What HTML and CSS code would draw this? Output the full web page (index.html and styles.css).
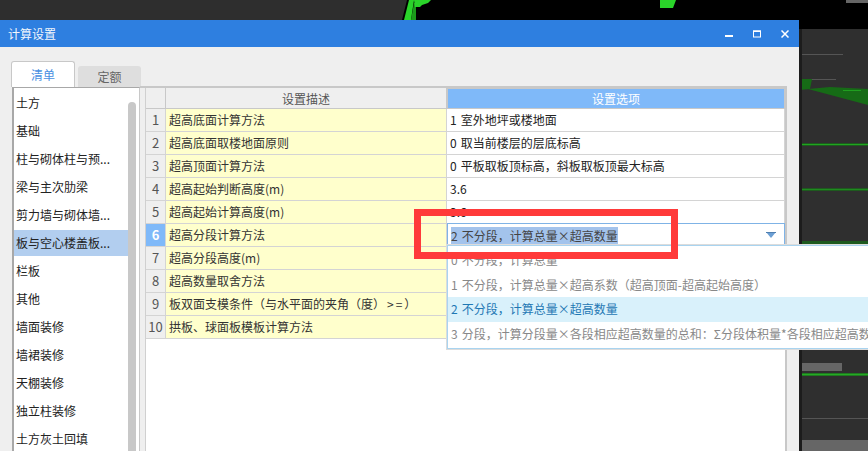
FILE: index.html
```html
<!DOCTYPE html>
<html lang="zh-CN">
<head>
<meta charset="utf-8">
<title>计算设置</title>
<link rel="stylesheet" href="styles.css">
</head>
<body>
<div class="stage">
  <svg class="backdrop" width="868" height="451" viewBox="0 0 868 451">
    <rect width="868" height="451" fill="#000"/>
    <polygon points="0,0 407,0 402,20 0,20" fill="#2e2e2e"/>
    <polygon points="404,20 409,0 414,0 411,20" fill="#2ad42a"/>
    <polygon points="411,20 414,3 416,3 416,20" fill="#1b9a1b"/>
    <polygon points="414,0 431,0 428,3 422,5 420,7 415,7" fill="#2ad42a"/>
    <polygon points="660,0 676,0 673,8 660,8" fill="#2ad42a"/>
    <rect x="846" y="0" width="22" height="3" fill="#666"/>
    <rect x="799" y="29" width="69" height="422" fill="#2f2f2f"/>
    <rect x="799" y="54" width="44" height="1" fill="#555"/>
    <rect x="810" y="79" width="26" height="1" fill="#555"/>
    <polygon points="799,79 812,79 810,89 799,90" fill="#166b16"/>
    <polygon points="808,89 830,87 868,89 868,105" fill="#166b16"/>
    <rect x="843" y="90" width="18" height="1" fill="#1fa01f"/>
    <rect x="799" y="143" width="69" height="3" fill="#1e5a1e"/>
    <rect x="799" y="144" width="69" height="1" fill="#1fa51f"/>
    <rect x="799" y="188" width="69" height="3" fill="#1e5a1e"/>
    <rect x="799" y="189" width="69" height="1" fill="#1f8a1f"/>
    <rect x="799" y="241" width="69" height="4" fill="#1e5a1e"/>
    <rect x="799" y="363" width="43" height="8" fill="#666"/>
    <rect x="799" y="373" width="69" height="3" fill="#1f7a1f"/>
    <rect x="799" y="374" width="69" height="1" fill="#25a825"/>
    <rect x="799" y="418" width="69" height="1" fill="#555"/>
    <rect x="799" y="440" width="69" height="11" fill="#666"/>
    <rect x="799" y="29" width="3" height="422" fill="#1c1c1c"/>
  </svg>

  <section class="dialog">
    <header class="titlebar">
      <span class="title">计算设置</span>
      <div class="controls">
        <svg width="8" height="8" viewBox="0 0 8 8"><rect y="5" width="8" height="2" fill="#fff"/></svg>
        <svg width="8" height="8" viewBox="0 0 8 8"><rect x="0.5" y="1" width="7" height="6" fill="none" stroke="#fff"/><rect y="0.5" width="8" height="1.5" fill="#fff"/></svg>
        <svg width="8" height="8" viewBox="0 0 8 8"><path d="M0.5 0.5L7.5 7.5M7.5 0.5L0.5 7.5" stroke="#fff" stroke-width="1.5" fill="none"/></svg>
      </div>
    </header>

    <div class="content">
      <div class="tabs">
        <div class="tab tab-active">清单</div>
        <div class="tab">定额</div>
      </div>
      <div class="main">
        <aside class="list">
          <div class="list-items">
            <div class="item">土方</div>
            <div class="item">基础</div>
            <div class="item">柱与砌体柱与预...</div>
            <div class="item">梁与主次肋梁</div>
            <div class="item">剪力墙与砌体墙...</div>
            <div class="item item-selected">板与空心楼盖板...</div>
            <div class="item">栏板</div>
            <div class="item">其他</div>
            <div class="item">墙面装修</div>
            <div class="item">墙裙装修</div>
            <div class="item">天棚装修</div>
            <div class="item">独立柱装修</div>
            <div class="item">土方灰土回填</div>
          </div>
          <div class="scrollbar"></div>
        </aside>
        <div class="panel">
          <div class="grid">
            <div class="row row-head">
              <div class="cell num"></div>
              <div class="cell desc-head">设置描述</div>
              <div class="cell value-head">设置选项</div>
            </div>
            <div class="row"><div class="cell num">1</div><div class="cell desc">超高底面计算方法</div><div class="cell value">1 室外地坪或楼地面</div></div>
            <div class="row"><div class="cell num">2</div><div class="cell desc">超高底面取楼地面原则</div><div class="cell value">0 取当前楼层的层底标高</div></div>
            <div class="row"><div class="cell num">3</div><div class="cell desc">超高顶面计算方法</div><div class="cell value">0 平板取板顶标高，斜板取板顶最大标高</div></div>
            <div class="row"><div class="cell num">4</div><div class="cell desc">超高起始判断高度(m)</div><div class="cell value">3.6</div></div>
            <div class="row"><div class="cell num">5</div><div class="cell desc">超高起始计算高度(m)</div><div class="cell value">3.6</div></div>
            <div class="row"><div class="cell num num-active">6</div><div class="cell desc">超高分段计算方法</div>
              <div class="cell value value-active"><span class="selection">2 不分段，计算总量×超高数量</span><svg class="caret" width="10" height="6" viewBox="0 0 10 6"><path d="M0 0H10L5 6Z" fill="#6b9fd4"/><rect width="10" height="1" fill="#4f7fb0"/></svg></div></div>
            <div class="row"><div class="cell num">7</div><div class="cell desc">超高分段高度(m)</div><div class="cell value"></div></div>
            <div class="row"><div class="cell num">8</div><div class="cell desc">超高数量取舍方法</div><div class="cell value"></div></div>
            <div class="row"><div class="cell num">9</div><div class="cell desc">板双面支模条件（与水平面的夹角（度）<span class="sign">&gt;=</span>）</div><div class="cell value"></div></div>
            <div class="row"><div class="cell num">10</div><div class="cell desc">拱板、球面板模板计算方法</div><div class="cell value"></div></div>
          </div>
        </div>
      </div>
    </div>
  </section>

  <div class="dropdown">
    <div class="option">0 不分段，计算总量</div>
    <div class="option">1 不分段，计算总量×超高系数（超高顶面-超高起始高度）</div>
    <div class="option option-current">2 不分段，计算总量×超高数量</div>
    <div class="option">3 分段，计算分段量×各段相应超高数量的总和：Σ分段体积量*各段相应超高数量</div>
  </div>

  <div class="annotation"></div>
</div>
</body>
</html>
```

FILE: styles.css
```css
* { box-sizing: border-box; }
html, body { margin: 0; padding: 0; }
body {
  width: 868px;
  height: 451px;
  overflow: hidden;
  font-family: "Noto Sans CJK SC", "Noto Sans", sans-serif;
  font-size: 12px;
  color: #222;
}
.stage { position: relative; width: 868px; height: 451px; overflow: hidden; }
.backdrop { position: absolute; left: 0; top: 0; display: block; }

.dialog {
  position: absolute;
  left: 0;
  top: 20px;
  width: 799px;
  height: 431px;
  background: #efefef;
  overflow: hidden;
}
.titlebar {
  height: 27px;
  background: #2e7fe0;
  display: flex;
  align-items: center;
  justify-content: space-between;
  padding: 0 10px 0 8px;
  color: #f2f6fc;
}
.title { line-height: 27px; }
.controls { display: flex; gap: 20px; align-items: center; margin-right: 0; }
.controls svg { display: block; }

.content { padding-top: 15px; }
.tabs { display: flex; align-items: flex-end; gap: 3px; height: 25px; padding-left: 11px; }
.tab {
  width: 63px;
  height: 21px;
  background: #dedede;
  border-radius: 3px 3px 0 0;
  text-align: center;
  line-height: 21px;
  color: #666;
}
.tab-active {
  width: 64px;
  height: 26px;
  background: #fff;
  border: 1px solid #c8c8c8;
  border-bottom: 0;
  line-height: 25px;
  color: #4a90e2;
  position: relative;
  z-index: 1;
}

.main { display: flex; padding-left: 12px; height: 400px; margin-top: -1px; }
.list {
  width: 128px;
  flex: none;
  background: #fff;
  border-left: 2px solid #a8a8a8;
  border-top: 1px solid #a8a8a8;
  border-right: 1px solid #c8c8c8;
  margin-top: 1px;
  display: flex;
}
.list-items { width: 114px; flex: none; padding-top: 1px; }
.item { height: 28px; line-height: 28px; padding-left: 2px; white-space: nowrap; }
.item-selected {
  height: 26px;
  line-height: 26px;
  margin: 1px 0;
  background: #b2ceef;
}
.scrollbar {
  width: 8px;
  flex: none;
  margin-top: 14px;
  background: #c8c8c8;
  border-radius: 4px 4px 0 0;
}

.panel {
  width: 647px;
  flex: none;
  border-top: 2px solid #c8c8c8;
  padding-left: 5px;
}
.grid {
  height: 398px;
  width: 642px;
  background: #fff;
  border-left: 1px solid #d0d0d0;
  border-right: 2px solid #c8c8c8;
}
.row { display: flex; height: 23px; }
.row-head { height: 21px; }
.cell {
  height: 100%;
  line-height: 22px;
  border-bottom: 1px solid #d4d4d4;
  border-right: 1px solid #d4d4d4;
  white-space: nowrap;
  overflow: hidden;
  color: #333;
}
.num { width: 20px; flex: none; background: #efefef; text-align: center; color: #555; font-size: 13px; }
.num-active { background: #7fb9f9; color: #fff; font-weight: 700; }
.desc { width: 281px; flex: none; background: #ffffcc; padding-left: 3px; }
.sign { letter-spacing: 2px; padding-left: 2px; }
.value { flex: 1; background: #fff; padding-left: 3px; color: #222; word-spacing: 1.5px; }
.row-head .cell { border-color: #c8c8c8; }
.desc-head { width: 281px; flex: none; background: #efefef; text-align: center; color: #555; }
.value-head {
  flex: 1;
  background: #7fb9f9;
  border: 1px solid #6ea8e8;
  text-align: center;
  color: #fff;
  line-height: 19px;
}
.value-active {
  display: flex;
  align-items: center;
  justify-content: space-between;
  border: 1px solid #7fb3e6;
  height: 24px;
  margin-top: -1px;
  padding: 0 8px 0 3px;
}
.selection { background: #a3c3ec; line-height: 17px; color: #444; }
.caret { display: block; }

.dropdown {
  position: absolute;
  left: 447px;
  top: 245px;
  width: 520px;
  height: 104px;
  padding-top: 2px;
  background: #fff;
  border: 1px solid #a9d4f0;
  box-shadow: 0 0 0 1px #dcdcdc;
  color: #888;
  word-spacing: 1.5px;
}
.option { height: 24.5px; line-height: 24.5px; padding-left: 3px; white-space: nowrap; }
.option-current { background: #d9f1fb; color: #1f78b4; }

.annotation {
  position: absolute;
  left: 414px;
  top: 209px;
  width: 264px;
  height: 50px;
  border: 7px solid #ff3a3a;
}
```
